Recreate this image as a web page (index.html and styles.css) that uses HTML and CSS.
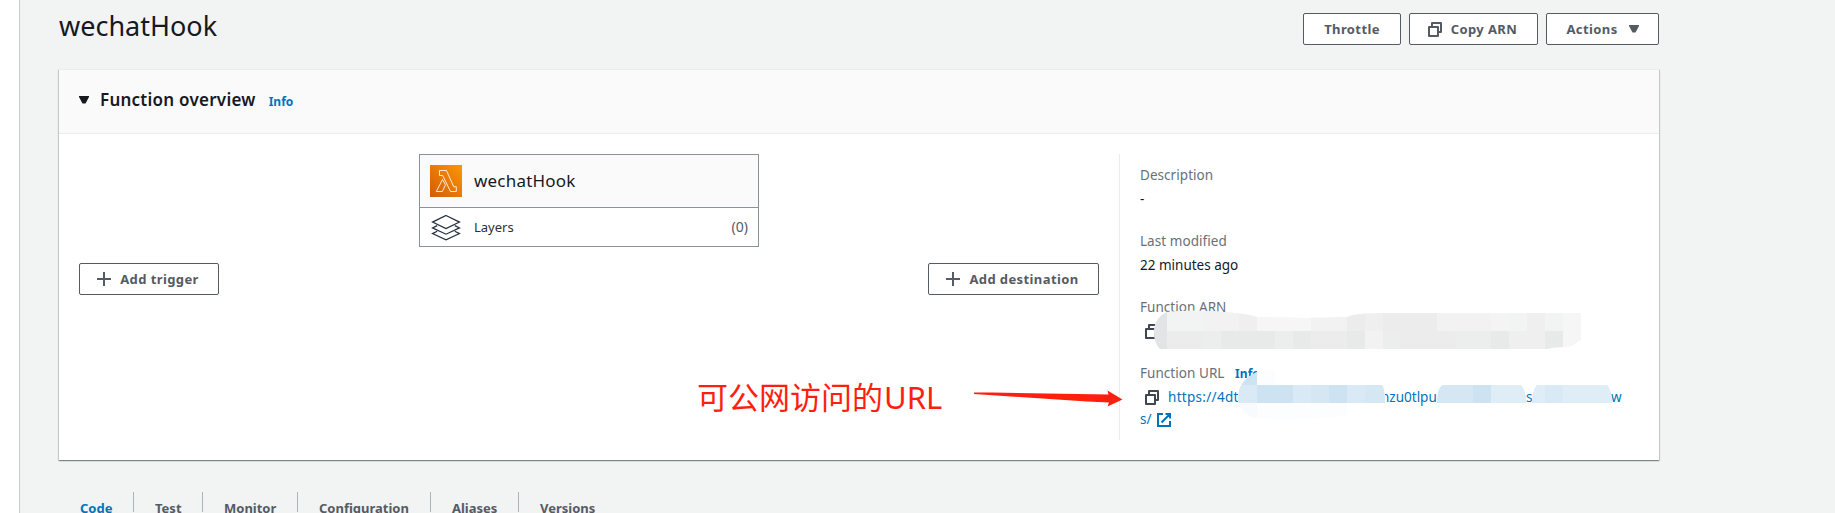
FILE: index.html
```html
<!DOCTYPE html>
<html lang="en">
<head>
<meta charset="utf-8">
<title>wechatHook - Lambda</title>
<link rel="stylesheet" href="styles.css">
</head>
<body>
<svg class="defs" aria-hidden="true">
  <symbol id="copy" viewBox="0 0 16 16"><path d="M2 6h9v9H2zM5 6V2h9v9h-3" fill="none" stroke="currentColor" stroke-width="2" stroke-linejoin="round"/></symbol>
  <symbol id="plus" viewBox="0 0 16 16"><path d="M8 1v14M1 8h14" fill="none" stroke="currentColor" stroke-width="2"/></symbol>
  <symbol id="caret" viewBox="0 0 10 8"><path d="M0 0h10v1L6.500 7.500h-3L0 1z" fill="currentColor"/></symbol>
</svg>
<div class="app">
  <div class="rail"></div>
  <main class="content">
    <header class="page-head">
      <h1 class="title">wechatHook</h1>
      <div class="actions">
        <button class="btn throttle">Throttle</button>
        <button class="btn copy-arn"><svg class="icon"><use href="#copy"/></svg><span>Copy ARN</span></button>
        <button class="btn menu"><span>Actions</span><svg class="caret"><use href="#caret"/></svg></button>
      </div>
    </header>

    <section class="panel">
      <div class="panel-head">
        <svg class="caret"><use href="#caret"/></svg>
        <h2 class="panel-title">Function overview</h2>
        <a class="info">Info</a>
      </div>
      <div class="panel-body">
        <div class="designer">
          <button class="btn add-trigger"><svg class="icon"><use href="#plus"/></svg><span>Add trigger</span></button>
          <div class="fn">
            <div class="fn-top">
              <svg class="lambda" viewBox="0 0 32 32">
                <defs><linearGradient id="g" x1="0" y1="1" x2="1" y2="0"><stop offset="0" stop-color="#d45b07"/><stop offset="1" stop-color="#fb9706"/></linearGradient></defs>
                <path fill="url(#g)" d="M0 0h32v32H0z"/>
                <path d="M12.500 14.500L6.300 26.500h6l3.200-6.600zM9.500 5.500v5h3.200L20.500 26.500h5.800v-4.800h-2.600L16.500 5.500z" fill="none" stroke="#fff" stroke-opacity=".85"/>
              </svg>
              <span class="fn-name">wechatHook</span>
            </div>
            <div class="fn-layers">
              <svg class="layers" viewBox="0 0 32 28"><path d="M16 2.500l13.500 6.600L16 15.500 2.500 9.100zM7.200 12.600L2.500 14.900 16 21.200l13.500-6.300-4.700-2.300M7.200 18.300l-4.700 2.300L16 26.900l13.500-6.300-4.700-2.300" fill="none" stroke="#232f3e" stroke-width="1.200"/></svg>
              <span class="layers-name">Layers</span>
              <span class="count">(0)</span>
            </div>
          </div>
          <button class="btn add-dest"><svg class="icon"><use href="#plus"/></svg><span>Add destination</span></button>
        </div>
        <dl class="details">
          <div class="item"><dt>Description</dt><dd>-</dd></div>
          <div class="item"><dt>Last modified</dt><dd>22 minutes ago</dd></div>
          <div class="item"><dt>Function ARN</dt><dd><svg class="icon lead"><use href="#copy"/></svg></dd></div>
          <div class="item">
            <dt>Function URL <a class="info">Info</a></dt>
            <dd class="url">
              <div class="url-row"><svg class="icon lead"><use href="#copy"/></svg><a class="u1">https://4dt</a><a class="u2">nzu0tlpu</a><a class="u3">s</a><a class="u4">w</a></div>
              <div class="url-row"><a>s/</a><svg class="ext" viewBox="0 0 14 14"><path d="M6 1H1v12h12V8M8.500 1H13v4.500M13 1L4.500 9.500" fill="none" stroke="currentColor" stroke-width="2"/></svg></div>
            </dd>
          </div>
        </dl>
      </div>
    </section>

    <nav class="tabs">
      <a class="tab code">Code</a><a class="tab test">Test</a><a class="tab monitor">Monitor</a><a class="tab config">Configuration</a><a class="tab aliases">Aliases</a><a class="tab versions">Versions</a>
    </nav>
  </main>
</div>

<svg class="overlay" viewBox="0 0 1835 513" shape-rendering="crispEdges">
  <defs>
    <clipPath id="arn"><path d="M1154 331Q1155 317 1167 312Q1200 309 1235 313Q1249 314 1257 317Q1300 319 1347 317Q1357 313 1383 313H1581V339Q1575 346 1563 347Q1552 347 1548 349H1160Q1154 343 1154 331z"/></clipPath>
    <clipPath id="url"><path d="M1257 372V385H1382Q1385 388 1385 403H1257V419Q1238 413 1238 397Q1239 380 1257 372zM1437 403Q1437 389 1442 385H1521Q1526 391 1526 403zM1532 403Q1532 392 1537 385H1607Q1612 391 1612 403z"/></clipPath>
  </defs>
  <g clip-path="url(#arn)">
    <path fill="#efefef" d="M1149 308h432v41h-432z"/>
    <path fill="#e3e4e6" d="M1149 308h18v41h-18z"/>
    <path fill="#f2f4f3" d="M1167 308h36v23h-36zM1509 313h18v18h-18zM1545 313h18v18h-18z"/>
    <path fill="#f2f2f2" d="M1203 308h36v23h-36zM1311 313h36v18h-36zM1437 313h54v18h-54zM1365 331h18v18h-18z"/>
    <path fill="#f6f6f6" d="M1257 313h54v18h-54zM1563 313h18v36h-18z"/>
    <path fill="#f4f4f4" d="M1491 313h18v18h-18z"/>
    <path fill="#ececec" d="M1347 313h18v18h-18zM1383 313h54v18h-54zM1167 331h36v18h-36zM1311 331h36v18h-36zM1401 331h54v18h-54z"/>
    <path fill="#e8e9e9" d="M1221 331h54v18h-54zM1293 331h18v18h-18zM1347 331h18v18h-18zM1491 331h18v18h-18zM1545 331h18v18h-18z"/>
    <path fill="#ebeeed" d="M1203 331h18v18h-18zM1275 331h18v18h-18zM1383 331h18v18h-18zM1455 331h36v18h-36z"/>
  </g>
  <path fill="#fcfdff" d="M1257 371h18v14h-18zM1257 385h128v18h-128zM1257 403h90v13l-60 4-30-1z"/>
  <g clip-path="url(#url)">
    <path fill="#d4e7f3" d="M1238 371h380v32h-380z"/>
    <path fill="#f8fbfe" d="M1238 403h19v17h-19z"/>
    <path fill="#cde3f1" d="M1238 371h19v14h-19zM1257 385h36v18h-36zM1329 385h18v18h-18zM1473 385h18v18h-18z"/>
    <path fill="#d9e9f5" d="M1238 385h19v18h-19zM1293 385h18v18h-18zM1347 385h18v18h-18zM1545 385h18v18h-18z"/>
    <path fill="#dfeef6" d="M1491 385h54v18h-54zM1563 385h50v18h-50z"/>
  </g>
  <path fill="#ff1f10" shape-rendering="auto" d="M974 392.500h18L1108.500 394.500 1107.500 390.500 1122.500 399.500 1107.500 406.500 1109 402.500 1087 401.500 974 394z"/>
</svg>
<div class="note">可公网访问的<span>URL</span></div>
</body>
</html>
```
FILE: styles.css
```css
* { box-sizing: border-box; }
body { margin: 0; height: 513px; overflow: hidden; position: relative; background: #f2f3f3; color: #16191f; font: 14px/22px "Noto Sans", "Noto Sans CJK SC", sans-serif; }
h1, h2, dl, dd { margin: 0; font-weight: 400; }
.defs { position: absolute; width: 0; height: 0; }
.app { display: flex; height: 513px; }
.rail { width: 20px; background: #fff; border-right: 1px solid #c6cccc; flex: none; }
.content { width: 1639px; padding-left: 39px; flex: none; }
.page-head { display: flex; justify-content: space-between; height: 69px; padding-top: 8px; }
.title { font-size: 27px; line-height: 36px; }
.actions { display: flex; gap: 8px; padding-top: 5px; }
.btn { display: flex; align-items: center; justify-content: center; gap: 8px; height: 32px; padding: 0; background: #fff; border: 1px solid #545b64; border-radius: 2px; color: #545b64; font: bold 13px/20px "Noto Sans", sans-serif; letter-spacing: .4px; flex: none; white-space: nowrap; }
.throttle { width: 98px; }
.copy-arn { width: 129px; padding-right: 3px; }
.menu { width: 113px; gap: 11px; }
.icon { width: 16px; height: 16px; flex: none; }
.caret { width: 10px; height: 8px; flex: none; }
.panel { height: 391px; background: #fff; border-top: 1px solid #eaeded; box-shadow: 0 1px 1px 0 rgba(0,28,36,.3), 1px 1px 1px 0 rgba(0,28,36,.15), -1px 1px 1px 0 rgba(0,28,36,.15); }
.panel-head { display: flex; align-items: center; height: 64px; padding: 0 20px 3px; background: #fafafa; border-bottom: 1px solid #eaeded; }
.panel-title { margin-left: 11px; font-size: 17px; font-weight: 600; letter-spacing: .25px; }
.info { color: #0073bb; font-size: 12px; font-weight: 700; }
.panel-head .info { margin: 4px 0 0 13px; }
.panel-body { display: flex; padding: 20px; height: 326px; }
.designer { display: flex; justify-content: space-between; width: 1020px; flex: none; }
.designer .btn { margin-top: 109px; padding-right: 3px; }
.add-trigger { width: 140px; }
.add-dest { width: 171px; }
.fn { width: 340px; height: 93px; margin-left: 31px; border: 1px solid #879596; }
.fn-top { display: flex; align-items: center; height: 53px; padding-left: 10px; background: #fafafa; border-bottom: 1px solid #879596; }
.lambda { width: 32px; height: 32px; }
.fn-name { margin-left: 12px; font-size: 17px; letter-spacing: .2px; }
.fn-layers { display: flex; align-items: center; height: 38px; padding: 0 10px; font-size: 13px; }
.layers { width: 32px; height: 28px; }
.layers-name { margin-left: 12px; color: #2b3038; }
.count { margin-left: auto; color: #545b64; font-size: 14px; }
.details { width: 520px; margin-left: 20px; padding: 10px 0 0 20px; border-left: 1px solid #eaeded; font-size: 13.5px; flex: none; }
.item { height: 66px; }
dt { height: 24px; color: #687078; letter-spacing: .05px; }
dt .info { margin-left: 7px; }
.lead { display: block; margin: 3px 0 0 4px; color: #414750; }
.url { color: #0073bb; }
.url-row { display: flex; height: 22px; white-space: nowrap; }
.u1 { margin-left: 8px; width: 77px; letter-spacing: .3px; }
.u2 { margin-left: 136px; width: 145px; }
.u3 { width: 85px; }
.ext { width: 14px; height: 14px; margin: 5px 0 0 5px; }
.tabs { display: flex; margin-top: 32px; height: 20px; }
.tab { height: 20px; padding: 5px 0 0 21px; color: #545b64; font-size: 13px; font-weight: 700; line-height: 22px; border-right: 1px solid #aab7b8; }
.code { width: 75px; color: #0073bb; }
.test { width: 69px; }
.monitor { width: 95px; }
.config { width: 133px; }
.aliases { width: 88px; }
.versions { border-right: 0; }
.overlay { position: absolute; left: 0; top: 0; width: 1835px; height: 513px; }
.note { position: absolute; left: 697px; top: 376px; color: #ff1f10; font: 31px/40px "Noto Sans CJK SC", sans-serif; white-space: nowrap; }
.note span { margin-left: 1px; font-family: "Noto Sans", sans-serif; font-size: 31px; }
```
